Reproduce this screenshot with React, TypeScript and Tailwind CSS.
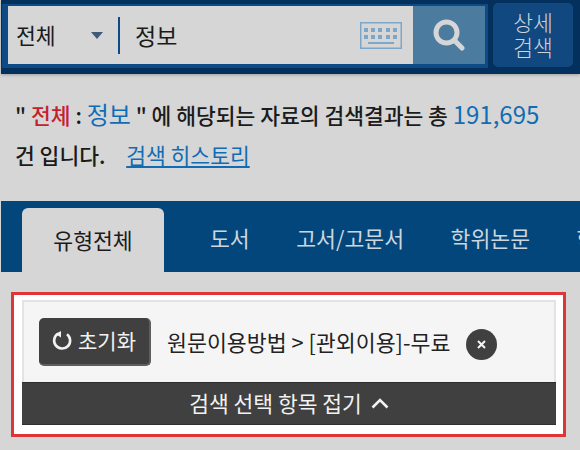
export default function App() {
  return (
    <div className="w-[580px] h-[450px] overflow-hidden bg-[#d6d6d6] pl-px font-['Noto_Sans_CJK_KR','Liberation_Sans',sans-serif] text-[#1b1b1b]">
      <header className="h-[74px] flex items-start gap-[5px] bg-[#03305c] pt-[3px] pl-px pr-[7px] shadow-[0_1px_3px_rgba(0,0,0,0.25)]">
        <div className="w-[486px] h-[64px] mt-px flex bg-[#0e4a85] pt-[2px] pb-[4px] pl-[6px] pr-[3px]">
          <div className="w-[405px] flex items-center bg-[#d6d6d6]">
            <span className="w-[62px] pl-[8px] text-[21.6px] leading-none">전체</span>
            <svg width="12" height="7" viewBox="0 0 12 7" className="ml-[21px] mt-[1px]"><path d="M0 0h12L6 7z" fill="#3f5a78" /></svg>
            <div className="ml-[15px] h-[37px] w-[2px] bg-[#0e4a85]" />
            <span className="ml-[15px] text-[23px] leading-none">정보</span>
            <svg width="42" height="27" viewBox="0 0 42 27" className="ml-auto mr-[11px]" fill="#7ea6c6">
              <rect x="0.75" y="0.75" width="40.5" height="25.5" fill="none" stroke="#7ea6c6" strokeWidth="1.5" />
              {[4, 11, 18, 26, 33].map((x) => <rect key={x} x={x} y="6" width="4" height="4" />)}
              {[4, 11, 18, 26, 33].map((x) => <rect key={x} x={x} y="13" width="4" height="4" />)}
              <rect x="8" y="20" width="26" height="2" />
            </svg>
          </div>
          <div className="w-[72px] flex items-center justify-center bg-[#4c7ba0]">
            <svg width="32" height="32" viewBox="0 0 32 32" fill="none" stroke="#d6d6d6" strokeLinecap="round">
              <circle cx="13.5" cy="13.5" r="10.5" strokeWidth="5" />
              <path d="M22 22L29 29" strokeWidth="5" />
            </svg>
          </div>
        </div>
        <button className="w-[80px] h-[64px] pb-[2px] rounded-[5px] bg-[#124880] text-[#cdd3da] text-[21.6px] leading-[25px] font-light">상세<br />검색</button>
      </header>

      <p className="mt-[21px] ml-[14px] w-[550px] text-[21.5px] leading-[40px] font-medium whitespace-nowrap">
        " <span className="text-[#c4212f]">전체</span> : <span className="text-[#0f6cb5] text-[24px] leading-none font-normal">정보</span> " 에 해당되는 자료의 검색결과는 총 <span className="text-[#0f6cb5] text-[24px] leading-none font-normal">191,695</span>
        <br />
        건 입니다. <a className="ml-[16px] text-[#0f6cb5] font-normal underline">검색 히스토리</a>
      </p>

      <nav className="mt-[26px] h-[71px] flex items-end bg-[#03467b] pl-[21px] text-[21.6px] text-[#cdd6df] overflow-hidden">
        <div className="shrink-0 w-[142px] h-[64px] flex items-center justify-center rounded-t-[6px] bg-[#d6d6d6] text-[#1b1b1b] pt-[1px]">유형전체</div>
        <div className="h-[64px] flex items-center gap-[46.5px] pl-[46px] pb-[3px] whitespace-nowrap">
          <span>도서</span><span>고서/고문서</span><span>학위논문</span><span>학술지</span>
        </div>
      </nav>

      <section className="mt-[20px] ml-[10px] w-[555px] h-[145px] border-[3px] border-[#df3538] bg-white pt-[5px] pl-[8px] pr-[7px] pb-[9px] flex flex-col">
        <div className="h-[82px] flex items-center bg-[#f5f5f5] border-[2px] border-b-0 border-[#e3e3e3] pl-[15px]">
          <button className="w-[112px] h-[48px] flex items-center justify-center gap-[6px] rounded-[5px] bg-[#404040] border-r-2 border-b-2 border-[#5e5e5e] text-[#f2f2f2] text-[21px]">
            <svg width="20" height="20" viewBox="0 0 20 20" fill="none" stroke="#f2f2f2" strokeWidth="2.6">
              <path d="M6.2 2.6A8 8 0 1 0 15 3.2" />
              <path d="M9 6.5V0L3.5 3z" fill="#f2f2f2" stroke="none" />
            </svg>
            초기화
          </button>
          <span className="ml-[16px] mt-[1px] text-[21.7px] text-[#222]">원문이용방법 &gt; [관외이용]-무료</span>
          <span className="ml-[16px] mt-[4px] w-[31px] h-[31px] rounded-full bg-[#404040] flex items-center justify-center">
            <svg width="9" height="9" viewBox="0 0 9 9" stroke="#f5f5f5" strokeWidth="2"><path d="M1 1l7 7M8 1L1 8" /></svg>
          </span>
        </div>
        <div className="h-[43px] flex items-center justify-center gap-[9px] bg-[#404040] border-t border-b border-[#2f2f2f] text-[#f2f2f2] text-[21.5px]">
          검색 선택 항목 접기
          <svg width="18" height="11" viewBox="0 0 18 11" fill="none" stroke="#f2f2f2" strokeWidth="2.6"><path d="M1.5 9.5L9 2l7.5 7.5" /></svg>
        </div>
      </section>
    </div>
  );
}
